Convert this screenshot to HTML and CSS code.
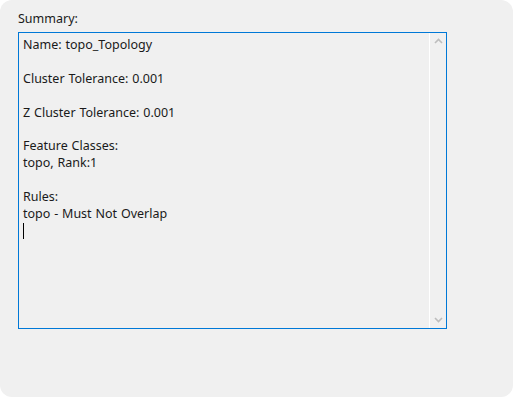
FILE: index.html
```html
<!DOCTYPE html>
<html>
<head>
<meta charset="utf-8">
<link rel="stylesheet" href="styles.css">
</head>
<body>
<div class="panel">
  <div class="label">Summary:</div>
  <div class="box">
    <div class="content">
      <div class="line">Name: topo_Topology</div>
      <div class="line">&nbsp;</div>
      <div class="line">Cluster Tolerance: 0.001</div>
      <div class="line">&nbsp;</div>
      <div class="line">Z Cluster Tolerance: 0.001</div>
      <div class="line">&nbsp;</div>
      <div class="line">Feature Classes:</div>
      <div class="line">topo, Rank:1</div>
      <div class="line">&nbsp;</div>
      <div class="line">Rules:</div>
      <div class="line">topo - Must Not Overlap</div>
      <div class="line"><span class="caret"></span></div>
    </div>
    <div class="scrollbar">
      <svg class="arrow" width="9" height="6" viewBox="0 0 9 6"><path d="M1 5 L4.5 1.5 L8 5" fill="none" stroke="#bdbdbd" stroke-width="1.6"/></svg>
      <svg class="arrow" width="9" height="6" viewBox="0 0 9 6"><path d="M1 1 L4.5 4.5 L8 1" fill="none" stroke="#bdbdbd" stroke-width="1.6"/></svg>
    </div>
  </div>
</div>
</body>
</html>
```
FILE: styles.css
```css
html, body {
  margin: 0;
  padding: 0;
  background: #ffffff;
}
.panel {
  width: 513px;
  height: 397px;
  box-sizing: border-box;
  background: #f0f0f0;
  border-radius: 12px;
  padding: 12px 66px 0 18px;
  font-family: "Noto Sans", "Open Sans", sans-serif;
  font-size: 12.5px;
  word-spacing: 0.6px;
  color: #1a1a1a;
}
.label {
  height: 20px;
  line-height: 14px;
}
.box {
  height: 297px;
  box-sizing: border-box;
  border: 1px solid #0078d7;
  display: flex;
}
.content {
  flex: 1;
  padding: 4px 4px 3px;
  border-right: 1px solid #ffffff;
}
.line {
  height: 16.9px;
  line-height: 16.9px;
  white-space: pre;
}
.caret {
  display: inline-block;
  width: 1px;
  height: 16px;
  background: #000;
  vertical-align: middle;
}
.scrollbar {
  width: 16px;
  display: flex;
  flex-direction: column;
  justify-content: space-between;
  align-items: center;
  padding: 5px 0 5px;
}
.arrow {
  display: block;
}
```
